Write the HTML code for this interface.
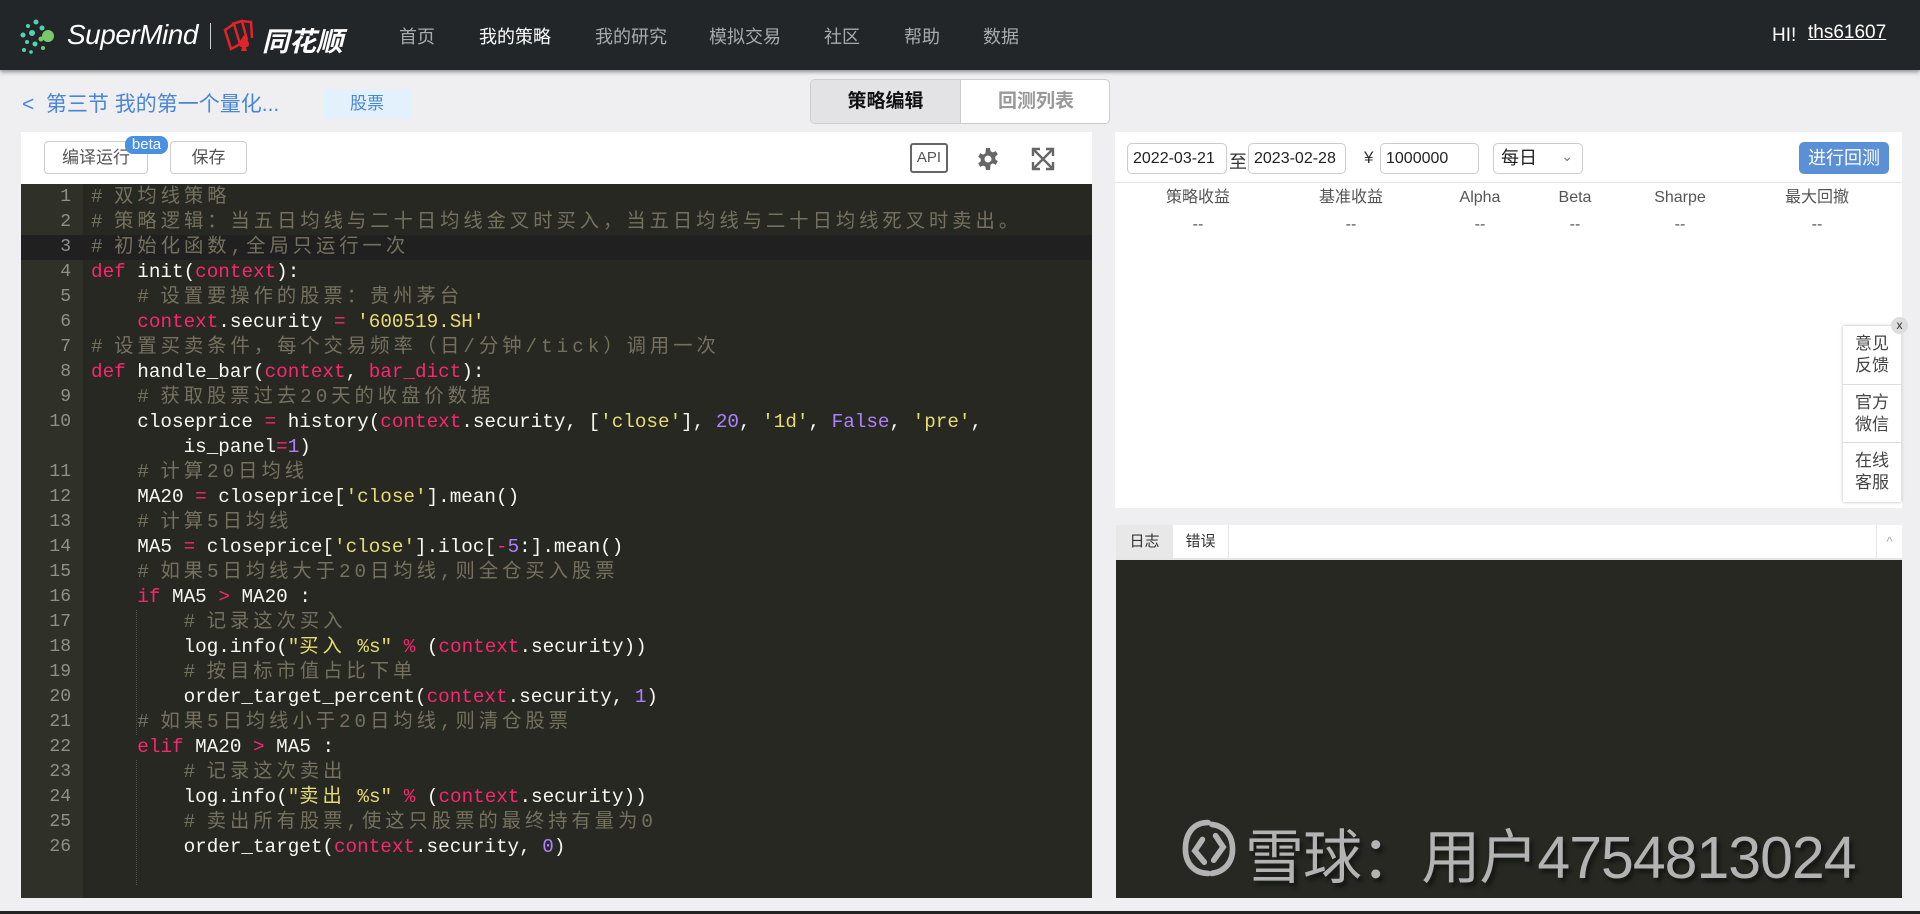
<!DOCTYPE html>
<html><head><meta charset="utf-8">
<style>
*{margin:0;padding:0;box-sizing:border-box}
body{width:1920px;height:914px;background:#efeff1;font-family:"Liberation Sans","Noto Sans CJK SC",sans-serif;position:relative;overflow:hidden}
.a{position:absolute}
#hdr{left:0;top:0;width:1920px;height:70px;background:#222629;box-shadow:0 2px 4px rgba(0,0,0,.4)}
.nav{top:23px;font-size:18px;color:#a8abad}
.code{font-family:"Liberation Mono","Noto Sans CJK SC",monospace;font-size:19.3px;color:#f8f8f2;white-space:pre;line-height:25px}
.c{color:#75715e;letter-spacing:0}
.k{color:#f92672}.s{color:#e6db74}.n{color:#ae81ff}
.cj{letter-spacing:4px}
.ln{font-family:"Liberation Mono",monospace;font-size:18px;color:#8f908a;text-align:right;width:50px;line-height:25px}
.inp{border:1px solid #ccc;border-radius:5px;background:#fff;height:31px;font-size:16px;color:#222;padding:0 5px;line-height:29px;white-space:nowrap;overflow:hidden}
.st{font-size:16px;color:#555;text-align:center;line-height:20px}
</style></head><body>
<div id="hdr" class="a">
  <svg class="a" style="left:18px;top:18px" width="42" height="38" viewBox="0 0 42 38">
    <g fill="#4fd3b4"><circle cx="18" cy="4" r="2.5"/><circle cx="10" cy="8" r="2"/><circle cx="5" cy="17" r="2.5"/><circle cx="14" cy="15" r="3"/><circle cx="9" cy="24" r="2"/><circle cx="17" cy="26" r="2.5"/><circle cx="6" cy="32" r="2"/><circle cx="13" cy="34" r="1.8"/><circle cx="24" cy="10" r="2.5"/></g>
    <g fill="#7bc86a"><circle cx="30" cy="18" r="6"/><circle cx="23" cy="21" r="2.5"/><circle cx="25" cy="30" r="2"/></g>
  </svg>
  <div class="a" style="left:67px;top:19px;font-size:28px;color:#fff;font-style:italic;letter-spacing:-0.5px">SuperMind</div>
  <div class="a" style="left:210px;top:23px;width:1px;height:26px;background:#ccc"></div>
  <svg class="a" style="left:222px;top:18px" width="36" height="36" viewBox="0 0 36 36">
    <g fill="none" stroke="#e0242a" stroke-width="2.5"><path d="M3 12 L12 6 L18 26 L9 31 Z"/><path d="M10 6 L20 3 L25 22"/><path d="M19 3 L29 4 L30 20"/></g>
    <path d="M20 20 C16 25 16 29 20 29 L19 33 L25 33 L24 29 C28 29 28 25 24 20 L22 17 Z" fill="#e0242a"/>
  </svg>
  <div class="a" style="left:262px;top:20px;font-size:27px;color:#fff;font-weight:bold;font-style:italic">同花顺</div>
  <div class="a nav" style="left:399px">首页</div>
  <div class="a nav" style="left:479px;color:#fff">我的策略</div>
  <div class="a nav" style="left:595px">我的研究</div>
  <div class="a nav" style="left:709px">模拟交易</div>
  <div class="a nav" style="left:824px">社区</div>
  <div class="a nav" style="left:904px">帮助</div>
  <div class="a nav" style="left:983px">数据</div>
  <div class="a" style="left:1772px;top:25px;font-size:19px;color:#fff">HI!</div>
  <div class="a" style="left:1808px;top:22px;font-size:19px;color:#fff;text-decoration:underline">ths61607</div>
</div>

<div class="a" style="left:22px;top:88px;font-size:21px;color:#4a86d8">&lt;&nbsp; 第三节 我的第一个量化...</div>
<div class="a" style="left:323px;top:89px;width:88px;height:30px;background:#e3f1fd;color:#4a86d8;font-size:17px;text-align:center;line-height:30px">股票</div>
<div class="a" style="left:810px;top:79px;width:300px;height:45px;border:1px solid #ccc;border-radius:5px;background:#fff;overflow:hidden">
  <div class="a" style="left:0;top:0;width:150px;height:45px;background:#e3e3e6;border-right:1px solid #ccc;font-size:19px;font-weight:bold;text-align:center;line-height:43px;color:#111">策略编辑</div>
  <div class="a" style="left:150px;top:0;width:150px;height:45px;font-size:19px;font-weight:bold;text-align:center;line-height:43px;color:#999">回测列表</div>
</div>

<!-- editor -->
<div class="a" style="left:21px;top:132px;width:1071px;height:52px;background:#fff"></div>
<div class="a" style="left:44px;top:141px;width:104px;height:33px;border:1px solid #ccc;border-radius:4px;font-size:17px;color:#555;text-align:center;line-height:31px;background:#fff">编译运行</div>
<div class="a" style="left:125px;top:136px;width:43px;height:18px;border-radius:8px;background:#4a90e2;color:#fff;font-size:15px;text-align:center;line-height:17px">beta</div>
<div class="a" style="left:170px;top:141px;width:77px;height:33px;border:1px solid #ccc;border-radius:4px;font-size:17px;color:#555;text-align:center;line-height:31px">保存</div>
<div class="a" style="left:910px;top:143px;width:38px;height:30px;border:2px solid #666;border-radius:3px;font-size:15px;color:#555;text-align:center;line-height:26px">API</div>
<svg class="a" style="left:976px;top:147px" width="24" height="24" viewBox="0 0 24 24"><path fill="#666" d="M10 1h4l.6 3.2 2.2 1.2 3-1.3 2 3.4-2.5 2.1v2.6l2.5 2.1-2 3.4-3-1.3-2.2 1.2L14 23h-4l-.6-3.2-2.2-1.2-3 1.3-2-3.4 2.5-2.1V11.8L2.2 9.7l2-3.4 3 1.3 2.2-1.2z"/><circle cx="12" cy="12" r="3.5" fill="#fff"/></svg>
<svg class="a" style="left:1030px;top:146px" width="26" height="26" viewBox="0 0 26 26"><g fill="none" stroke="#666" stroke-width="2.4"><path d="M3 3l20 20M23 3L3 23"/><path d="M3 10V3h7M16 3h7v7M23 16v7h-7M10 23H3v-7"/></g></svg>

<div class="a" style="left:21px;top:184px;width:1071px;height:714px;background:#272822"></div>
<div class="a" style="left:21px;top:184px;width:62px;height:714px;background:#2f3129"></div>
<div class="a" style="left:21px;top:235px;width:1071px;height:25px;background:#202020"></div>
<div class="a" style="left:136px;top:610px;width:1px;height:125px;border-left:1px dotted #555"></div>
<div class="a" style="left:136px;top:760px;width:1px;height:125px;border-left:1px dotted #555"></div>
<div class="a ln" style="left:21px;top:185px">1<br>2<br>3<br>4<br>5<br>6<br>7<br>8<br>9<br>10<br><br>11<br>12<br>13<br>14<br>15<br>16<br>17<br>18<br>19<br>20<br>21<br>22<br>23<br>24<br>25<br>26</div>
<div class="a code" style="left:91px;top:185px"><span class="c"># <span class="cj">双均线策略</span></span>
<span class="c"># <span class="cj">策略逻辑：当五日均线与二十日均线金叉时买入，当五日均线与二十日均线死叉时卖出。</span></span>
<span class="c"># <span class="cj">初始化函数,全局只运行一次</span></span>
<span class="k">def</span> init(<span class="k">context</span>):
    <span class="c"># <span class="cj">设置要操作的股票：贵州茅台</span></span>
    <span class="k">context</span>.security <span class="k">=</span> <span class="s">'600519.SH'</span>
<span class="c"># <span class="cj">设置买卖条件，每个交易频率（日/分钟/tick）调用一次</span></span>
<span class="k">def</span> handle_bar(<span class="k">context</span>, <span class="k">bar_dict</span>):
    <span class="c"># <span class="cj">获取股票过去20天的收盘价数据</span></span>
    closeprice <span class="k">=</span> history(<span class="k">context</span>.security, [<span class="s">'close'</span>], <span class="n">20</span>, <span class="s">'1d'</span>, <span class="n">False</span>, <span class="s">'pre'</span>,
        is_panel<span class="k">=</span><span class="n">1</span>)
    <span class="c"># <span class="cj">计算20日均线</span></span>
    MA20 <span class="k">=</span> closeprice[<span class="s">'close'</span>].mean()
    <span class="c"># <span class="cj">计算5日均线</span></span>
    MA5 <span class="k">=</span> closeprice[<span class="s">'close'</span>].iloc[<span class="k">-</span><span class="n">5</span>:].mean()
    <span class="c"># <span class="cj">如果5日均线大于20日均线,则全仓买入股票</span></span>
    <span class="k">if</span> MA5 <span class="k">&gt;</span> MA20 :
        <span class="c"># <span class="cj">记录这次买入</span></span>
        log.info(<span class="s">"<span class="cj">买入</span> %s"</span> <span class="k">%</span> (<span class="k">context</span>.security))
        <span class="c"># <span class="cj">按目标市值占比下单</span></span>
        order_target_percent(<span class="k">context</span>.security, <span class="n">1</span>)
    <span class="c"># <span class="cj">如果5日均线小于20日均线,则清仓股票</span></span>
    <span class="k">elif</span> MA20 <span class="k">&gt;</span> MA5 :
        <span class="c"># <span class="cj">记录这次卖出</span></span>
        log.info(<span class="s">"<span class="cj">卖出</span> %s"</span> <span class="k">%</span> (<span class="k">context</span>.security))
        <span class="c"># <span class="cj">卖出所有股票,使这只股票的最终持有量为0</span></span>
        order_target(<span class="k">context</span>.security, <span class="n">0</span>)</div>

<!-- right panel -->
<div class="a" style="left:1115px;top:132px;width:787px;height:376px;background:#fff"></div>
<div class="a" style="left:1115px;top:182px;width:787px;height:1px;background:#e6e6e6"></div>
<div class="a inp" style="left:1127px;top:143px;width:100px">2022-03-21</div>
<div class="a" style="left:1229px;top:148px;font-size:18px;color:#333">至</div>
<div class="a inp" style="left:1248px;top:143px;width:98px">2023-02-28</div>
<div class="a" style="left:1364px;top:148px;font-size:17px;color:#333">¥</div>
<div class="a inp" style="left:1380px;top:143px;width:99px">1000000</div>
<div class="a inp" style="left:1493px;top:143px;width:90px;font-size:18px;padding-left:7px">每日<span style="position:absolute;right:9px;top:-2px;color:#777;font-size:14px">&#8964;</span></div>
<div class="a" style="left:1799px;top:142px;width:90px;height:32px;background:#5b8fd6;border-radius:5px;color:#fff;font-size:18px;text-align:center;line-height:32px">进行回测</div>
<div class="a st" style="left:1158px;top:188px;width:80px">策略收益</div>
<div class="a st" style="left:1311px;top:188px;width:80px">基准收益</div>
<div class="a st" style="left:1440px;top:188px;width:80px">Alpha</div>
<div class="a st" style="left:1535px;top:188px;width:80px">Beta</div>
<div class="a st" style="left:1640px;top:188px;width:80px">Sharpe</div>
<div class="a st" style="left:1777px;top:188px;width:80px">最大回撤</div>
<div class="a st" style="left:1158px;top:215px;width:80px">--</div>
<div class="a st" style="left:1311px;top:215px;width:80px">--</div>
<div class="a st" style="left:1440px;top:215px;width:80px">--</div>
<div class="a st" style="left:1535px;top:215px;width:80px">--</div>
<div class="a st" style="left:1640px;top:215px;width:80px">--</div>
<div class="a st" style="left:1777px;top:215px;width:80px">--</div>

<!-- feedback -->
<div class="a" style="left:1843px;top:326px;width:58px;height:176px;background:#fff;box-shadow:0 0 3px rgba(0,0,0,.3)">
  <div style="height:59px;border-bottom:1px solid #ddd;font-size:17px;color:#444;text-align:center;line-height:22px;padding-top:7px">意见<br>反馈</div>
  <div style="height:58px;border-bottom:1px solid #ddd;font-size:17px;color:#444;text-align:center;line-height:22px;padding-top:7px">官方<br>微信</div>
  <div style="height:58px;font-size:17px;color:#444;text-align:center;line-height:22px;padding-top:7px">在线<br>客服</div>
</div>
<div class="a" style="left:1891px;top:317px;width:17px;height:17px;border-radius:50%;background:#ddd;font-size:12px;text-align:center;line-height:16px;color:#333">x</div>

<!-- log -->
<div class="a" style="left:1116px;top:525px;width:786px;height:35px;background:#fff;border-bottom:2px solid #e6e6e6"></div>
<div class="a" style="left:1116px;top:525px;width:57px;height:33px;background:#e8e8e8;font-size:15px;color:#333;text-align:center;line-height:33px">日志</div>
<div class="a" style="left:1173px;top:525px;width:56px;height:33px;border-right:1px solid #e6e6e6;font-size:15px;color:#333;text-align:center;line-height:33px">错误</div>
<div class="a" style="left:1876px;top:525px;width:26px;height:33px;border-left:1px solid #e6e6e6;font-size:13px;color:#aaa;text-align:center;line-height:33px">^</div>
<div class="a" style="left:1116px;top:560px;width:786px;height:338px;background:#272822"></div>

<svg class="a" style="left:1180px;top:815px" width="58" height="66" viewBox="0 0 58 70"><g fill="none" stroke="#b3b3b3" stroke-width="6" stroke-linecap="round"><path d="M28 8 C12 8 4 20 4 36 C4 52 14 62 28 62"/><path d="M32 10 C48 12 54 24 54 36 C54 50 46 60 32 62"/><path d="M22 26 L14 38 L24 50"/><path d="M36 22 L44 34 L34 48"/></g></svg>
<div class="a" style="left:1245px;top:810px;font-size:59px;color:#b3b3b3;letter-spacing:-1px;white-space:nowrap;text-shadow:3px 4px 4px rgba(0,0,0,.5)">雪球<span style="letter-spacing:-14px">：</span> 用户4754813024</div>

<div class="a" style="left:0;top:911px;width:1920px;height:3px;background:#222"></div>
</body></html>
